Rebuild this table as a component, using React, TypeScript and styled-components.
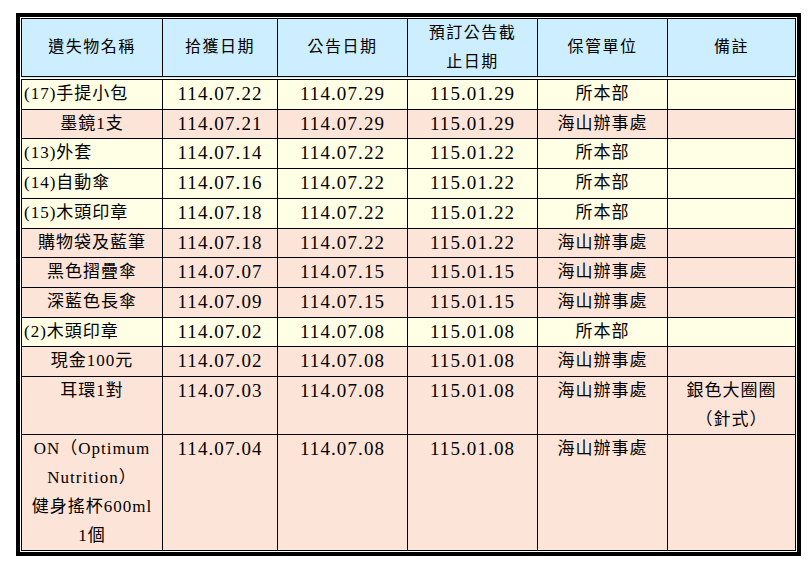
import React from 'react';
import styled, { createGlobalStyle } from 'styled-components';

const GlobalStyle = createGlobalStyle`
  html, body {
    margin: 0;
    padding: 0;
    background: #fff;
  }
`;

const Page = styled.div`
  padding: 13px 0 0 16px;
  font-family: "Liberation Serif", "Noto Sans CJK TC", serif;
  color: #000;
`;

const Frame = styled.div`
  display: inline-block;
  border: 4px solid #000;
  padding: 1px;
  background: #fff;
`;

const Table = styled.table`
  width: 774px;
  table-layout: fixed;
  border-collapse: collapse;
  border: 1px solid #000;
`;

const HeadCell = styled.th`
  background: #cceeff;
  border: 1px solid #000;
  border-bottom: 4px double #000;
  font-weight: normal;
  font-size: 16px;
  letter-spacing: 1.5px;
  line-height: 28.5px;
  height: 57px;
  padding: 0;
  text-align: center;
  vertical-align: middle;
`;

const tones = {
  cream: '#ffffe6',
  pink: '#fde4d8',
};

const Row = styled.tr<{ $tone: keyof typeof tones }>`
  background: ${(p) => tones[p.$tone]};
`;

const Cell = styled.td<{ $align?: 'left' | 'center'; $date?: boolean }>`
  border: 1px solid #000;
  padding: 0 2px;
  font-size: ${(p) => (p.$date ? '19px' : '17px')};
  letter-spacing: ${(p) => (p.$date ? '1.1px' : '1px')};
  line-height: 28.7px;
  text-align: ${(p) => p.$align ?? 'center'};
  vertical-align: top;
  white-space: nowrap;
`;

type Item = {
  name: React.ReactNode;
  found: string;
  posted: string;
  until: string;
  unit: string;
  note?: React.ReactNode;
  tone: keyof typeof tones;
  left?: boolean;
};

const HQ = '所本部';
const HS = '海山辦事處';

const items: Item[] = [
  { name: '(17)手提小包', found: '114.07.22', posted: '114.07.29', until: '115.01.29', unit: HQ, tone: 'cream', left: true },
  { name: '墨鏡1支', found: '114.07.21', posted: '114.07.29', until: '115.01.29', unit: HS, tone: 'pink' },
  { name: '(13)外套', found: '114.07.14', posted: '114.07.22', until: '115.01.22', unit: HQ, tone: 'cream', left: true },
  { name: '(14)自動傘', found: '114.07.16', posted: '114.07.22', until: '115.01.22', unit: HQ, tone: 'cream', left: true },
  { name: '(15)木頭印章', found: '114.07.18', posted: '114.07.22', until: '115.01.22', unit: HQ, tone: 'cream', left: true },
  { name: '購物袋及藍筆', found: '114.07.18', posted: '114.07.22', until: '115.01.22', unit: HS, tone: 'pink' },
  { name: '黑色摺疊傘', found: '114.07.07', posted: '114.07.15', until: '115.01.15', unit: HS, tone: 'pink' },
  { name: '深藍色長傘', found: '114.07.09', posted: '114.07.15', until: '115.01.15', unit: HS, tone: 'pink' },
  { name: '(2)木頭印章', found: '114.07.02', posted: '114.07.08', until: '115.01.08', unit: HQ, tone: 'cream', left: true },
  { name: '現金100元', found: '114.07.02', posted: '114.07.08', until: '115.01.08', unit: HS, tone: 'pink' },
  {
    name: '耳環1對',
    found: '114.07.03',
    posted: '114.07.08',
    until: '115.01.08',
    unit: HS,
    note: (
      <>
        銀色大圈圈
        <br />
        （針式）
      </>
    ),
    tone: 'pink',
  },
  {
    name: (
      <>
        ON（Optimum
        <br />
        Nutrition）
        <br />
        健身搖杯600ml
        <br />
        1個
      </>
    ),
    found: '114.07.04',
    posted: '114.07.08',
    until: '115.01.08',
    unit: HS,
    tone: 'pink',
  },
];

export default function App() {
  return (
    <>
      <GlobalStyle />
      <Page>
        <Frame>
          <Table>
            <colgroup>
              <col style={{ width: 141 }} />
              <col style={{ width: 115 }} />
              <col style={{ width: 130 }} />
              <col style={{ width: 130 }} />
              <col style={{ width: 130 }} />
              <col style={{ width: 128 }} />
            </colgroup>
            <thead>
              <tr>
                <HeadCell>遺失物名稱</HeadCell>
                <HeadCell>拾獲日期</HeadCell>
                <HeadCell>公告日期</HeadCell>
                <HeadCell>
                  預訂公告截
                  <br />
                  止日期
                </HeadCell>
                <HeadCell>保管單位</HeadCell>
                <HeadCell>備註</HeadCell>
              </tr>
            </thead>
            <tbody>
              {items.map((it, i) => (
                <Row key={i} $tone={it.tone}>
                  <Cell $align={it.left ? 'left' : 'center'}>{it.name}</Cell>
                  <Cell $date>{it.found}</Cell>
                  <Cell $date>{it.posted}</Cell>
                  <Cell $date>{it.until}</Cell>
                  <Cell>{it.unit}</Cell>
                  <Cell>{it.note}</Cell>
                </Row>
              ))}
            </tbody>
          </Table>
        </Frame>
      </Page>
    </>
  );
}
